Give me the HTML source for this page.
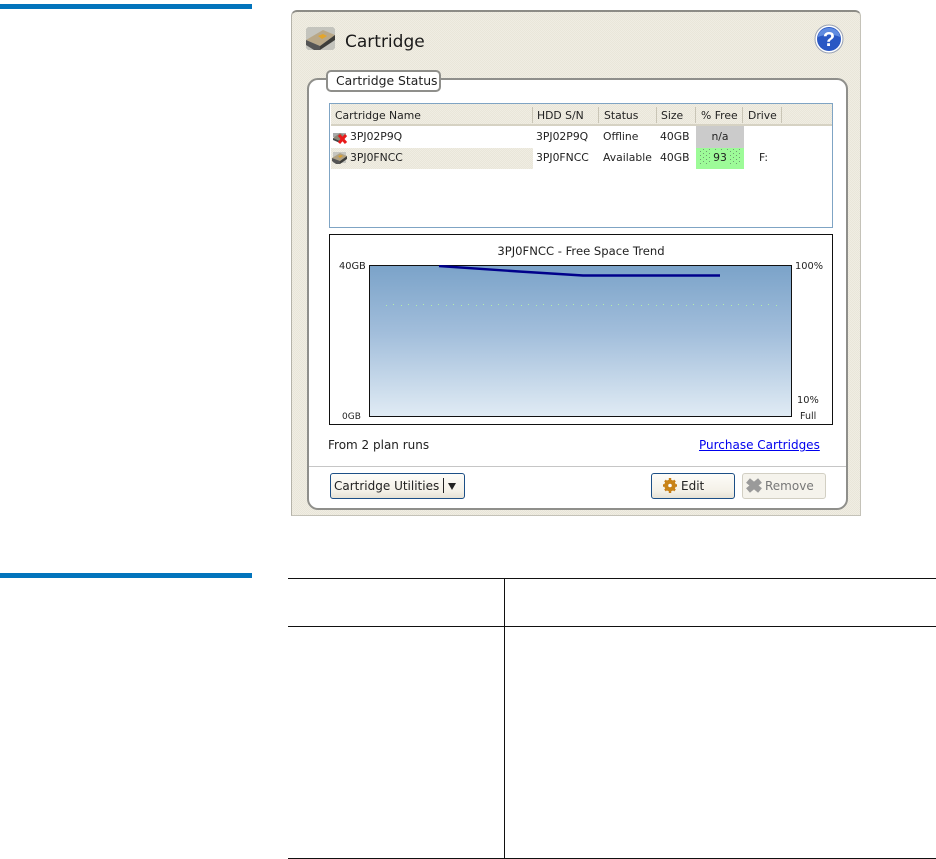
<!DOCTYPE html>
<html><head><meta charset="utf-8">
<style>
html,body{margin:0;padding:0;background:#fff;width:936px;height:859px;overflow:hidden}
body{position:relative;font-family:"DejaVu Sans","Liberation Sans",sans-serif;color:#111}
.a{position:absolute}
.t{position:absolute;font-size:10.8px;line-height:12px;white-space:nowrap;color:#222}
.sep{position:absolute;top:107px;width:1px;height:16px;background:#c9c5b6}
.btn{position:absolute;box-sizing:border-box;height:26px;border-radius:3px;border:1px solid #1c4f86;background:linear-gradient(#fdfcf9,#f4f1e8 70%,#e6e2d5);font-size:12px;line-height:24px;color:#222;white-space:nowrap}
.tex{background:repeating-conic-gradient(#f0ede3 0 25%,#e9e6d9 0 50%) 0 0/2px 2px}
</style></head><body>
<div class="a" style="left:0;top:4px;width:252px;height:5px;background:#0274bc"></div>
<div class="a" style="left:0;top:573px;width:252px;height:5px;background:#0274bc"></div>

<div class="a" style="left:288px;top:578px;width:648px;height:1px;background:#111"></div>
<div class="a" style="left:288px;top:626px;width:648px;height:1px;background:#111"></div>
<div class="a" style="left:288px;top:858px;width:648px;height:1px;background:#111"></div>
<div class="a" style="left:504px;top:578px;width:1px;height:281px;background:#111"></div>

<!-- panel -->
<div class="a tex" style="left:291px;top:10px;width:570px;height:506px;box-sizing:border-box;border-top:2px solid #8d8c86;border-left:1px solid #b5b3a9;border-right:1px solid #c4c2b8;border-bottom:1px solid #c4c2b8;border-top-left-radius:6px;border-top-right-radius:6px"></div>

<!-- title icon -->
<svg class="a" style="left:305px;top:25px" width="32" height="26" viewBox="0 0 32 26">
<path d="M3 2h25l2 2v19l-2 2H3l-2-2V4z" fill="#c4c4bd"/>
<path d="M1 15l17-10 12 5-15 11z" fill="#b9a888"/>
<path d="M1 15l14 6v4H9L1 20z" fill="#555"/>
<path d="M15 21l15-11v5L15 25z" fill="#3d3d3a"/>
<path d="M13 11l5-2 4 2-5 3z" fill="#e3a52b"/>
</svg>
<div class="a" style="left:345px;top:32px;font-size:17px;line-height:20px;color:#1a1a1a">Cartridge</div>

<!-- help -->
<svg class="a" style="left:814px;top:24px" width="30" height="30" viewBox="0 0 30 30">
<circle cx="15" cy="15" r="14" fill="#fff" stroke="#9aa3b5"/>
<circle cx="15" cy="15" r="12" fill="#2a58c4"/>
<path d="M4 13a11 9 0 0 1 22 0c-6-3-15-3-22 0z" fill="#5f8be0"/>
<text x="15" y="22" text-anchor="middle" font-family="Liberation Sans" font-weight="bold" font-size="20" fill="#fff">?</text>
</svg>

<!-- inner -->
<div class="a" style="left:307px;top:78px;width:541px;height:432px;box-sizing:border-box;background:#fff;border:2px solid #8f8f8b;border-radius:11px"></div>
<div class="a" style="left:326px;top:70px;width:115px;height:22px;box-sizing:border-box;background:#fff;border:2px solid #8f8f8b;border-radius:5px;font-size:12.4px;line-height:18px;padding-left:8px;color:#222;white-space:nowrap">Cartridge Status</div>

<!-- table -->
<div class="a" style="left:329px;top:103px;width:504px;height:125px;box-sizing:border-box;border:1px solid #7fa4c4;background:#fff"></div>
<div class="a tex" style="left:331px;top:104px;width:501px;height:22px;box-sizing:border-box;border-bottom:2px solid #d6d2c3"></div>
<div class="sep" style="left:532px"></div><div class="sep" style="left:598px"></div><div class="sep" style="left:656px"></div><div class="sep" style="left:695px"></div><div class="sep" style="left:742px"></div><div class="sep" style="left:781px"></div>
<div class="t" style="left:335px;top:110px">Cartridge Name</div>
<div class="t" style="left:537px;top:110px">HDD S/N</div>
<div class="t" style="left:604px;top:110px">Status</div>
<div class="t" style="left:661px;top:110px">Size</div>
<div class="t" style="left:701px;top:110px;width:40px;overflow:hidden">% Free</div>
<div class="t" style="left:748px;top:110px">Drive</div>

<div class="a tex" style="left:331px;top:148px;width:202px;height:21px"></div>
<div class="a" style="left:696px;top:126px;width:48px;height:22px;background:#cbcbcb"></div>
<div class="a" style="left:696px;top:148px;width:48px;height:21px;background:#9dfb98"></div>
<svg class="a" style="left:696px;top:148px" width="48" height="21">
<defs><pattern id="gd" width="6" height="4" patternUnits="userSpaceOnUse"><rect x="1" y="1" width="1" height="1" fill="#6f9f70"/><rect x="4" y="3" width="1" height="1" fill="#6f9f70"/></pattern></defs>
<rect x="2" y="1" width="44" height="15" fill="url(#gd)"/>
<rect x="16" y="2" width="16" height="15" fill="#9dfb98"/>
</svg>

<svg class="a" style="left:332px;top:130px" width="16" height="14" viewBox="0 0 16 14">
<path d="M1 3h13v4H1z" fill="#aaa"/><path d="M1 8l7-5 6 3-6 5z" fill="#8b8676"/><path d="M1 8l7 3v2L1 10z" fill="#444"/>
<path d="M7 5l7 8M14 5l-7 8" stroke="#e81a1a" stroke-width="3"/>
</svg>
<svg class="a" style="left:332px;top:151px" width="15" height="13" viewBox="0 0 15 13">
<path d="M1 1h13v11H1z" fill="#c6c6c0"/><path d="M0 7l8-5 7 3-7 5z" fill="#b0a284"/><path d="M0 7l8 3v3H4L0 10z" fill="#555"/><path d="M8 10l7-5v3l-7 5z" fill="#3d3d3a"/><path d="M6 5l3-1 2 1-3 2z" fill="#d9a030"/>
</svg>

<div class="t" style="left:350px;top:131px">3PJ02P9Q</div>
<div class="t" style="left:536px;top:131px">3PJ02P9Q</div>
<div class="t" style="left:603px;top:131px">Offline</div>
<div class="t" style="left:660px;top:131px">40GB</div>
<div class="t" style="left:696px;top:131px;width:48px;text-align:center">n/a</div>
<div class="t" style="left:350px;top:152px">3PJ0FNCC</div>
<div class="t" style="left:536px;top:152px">3PJ0FNCC</div>
<div class="t" style="left:603px;top:152px">Available</div>
<div class="t" style="left:660px;top:152px">40GB</div>
<div class="t" style="left:696px;top:152px;width:48px;text-align:center">93</div>
<div class="t" style="left:759px;top:152px">F:</div>

<!-- chart -->
<div class="a" style="left:329px;top:234px;width:504px;height:191px;box-sizing:border-box;border:1px solid #111;background:#fff"></div>
<div class="t" style="left:330px;top:245px;width:502px;text-align:center;font-size:11.6px">3PJ0FNCC - Free Space Trend</div>
<div class="a" style="left:369px;top:265px;width:423px;height:152px;box-sizing:border-box;border:1px solid #111;background:linear-gradient(#7ba3c9,#a2bedb 45%,#e0ebf4)"></div>
<svg class="a" style="left:369px;top:265px" width="423" height="50" viewBox="0 0 423 50">
<defs><pattern id="cd" width="15" height="5" patternUnits="userSpaceOnUse"><rect x="2" y="0" width="1" height="1" fill="#b4f0a8"/><rect x="9" y="4" width="1" height="1" fill="#b4f0a8"/></pattern></defs>
<rect x="12" y="37" width="400" height="6" fill="url(#cd)"/>
<path d="M70 1L150 6.500L214 10.500H351" fill="none" stroke="#00008b" stroke-width="2.400"/>
</svg>
<div class="t" style="left:339px;top:261px;font-size:9.8px">40GB</div>
<div class="t" style="left:342px;top:411px;font-size:9px">0GB</div>
<div class="t" style="left:795px;top:261px;font-size:9.8px">100%</div>
<div class="t" style="left:797px;top:395px;font-size:9.8px">10%</div>
<div class="t" style="left:800px;top:411px;font-size:9.5px">Full</div>

<div class="a" style="left:328px;top:438px;font-size:12px;line-height:14px;color:#222;white-space:nowrap">From 2 plan runs</div>
<div class="a" style="left:699px;top:438px;font-size:12px;line-height:14px;color:#0000ee;text-decoration:underline;white-space:nowrap">Purchase Cartridges</div>

<div class="a" style="left:309px;top:466px;width:537px;height:1px;background:#c6c6c6"></div>

<div class="btn" style="left:330px;top:473px;width:135px;padding-left:3px">Cartridge Utilities</div>
<div class="a" style="left:443px;top:478px;width:1px;height:15px;background:#222"></div>
<div class="a" style="left:448px;top:483px;width:0;height:0;border-left:4px solid transparent;border-right:4px solid transparent;border-top:7px solid #222"></div>
<div class="btn" style="left:651px;top:473px;width:84px;padding-left:29px">Edit</div>
<svg class="a" style="left:662px;top:477px" width="16" height="17" viewBox="0 0 16 17">
<path d="M8 1v15M1 8.500h14M3 3.500l10 10M13 3.500l-10 10" stroke="#c47c14" stroke-width="2.400"/>
<circle cx="8" cy="8.500" r="4" fill="none" stroke="#c98418" stroke-width="3.500"/>
<circle cx="8" cy="8.500" r="1.800" fill="#fff"/>
</svg>
<div class="btn" style="left:742px;top:473px;width:84px;padding-left:22px;border-color:#d2cfc3;color:#777;background:#f5f3ec">Remove</div>
<svg class="a" style="left:746px;top:477px" width="16" height="17" viewBox="0 0 16 17">
<path d="M2 3.500l12 10M14 3.500l-12 10" stroke="#9a9a9a" stroke-width="6"/>
</svg>
</body></html>
